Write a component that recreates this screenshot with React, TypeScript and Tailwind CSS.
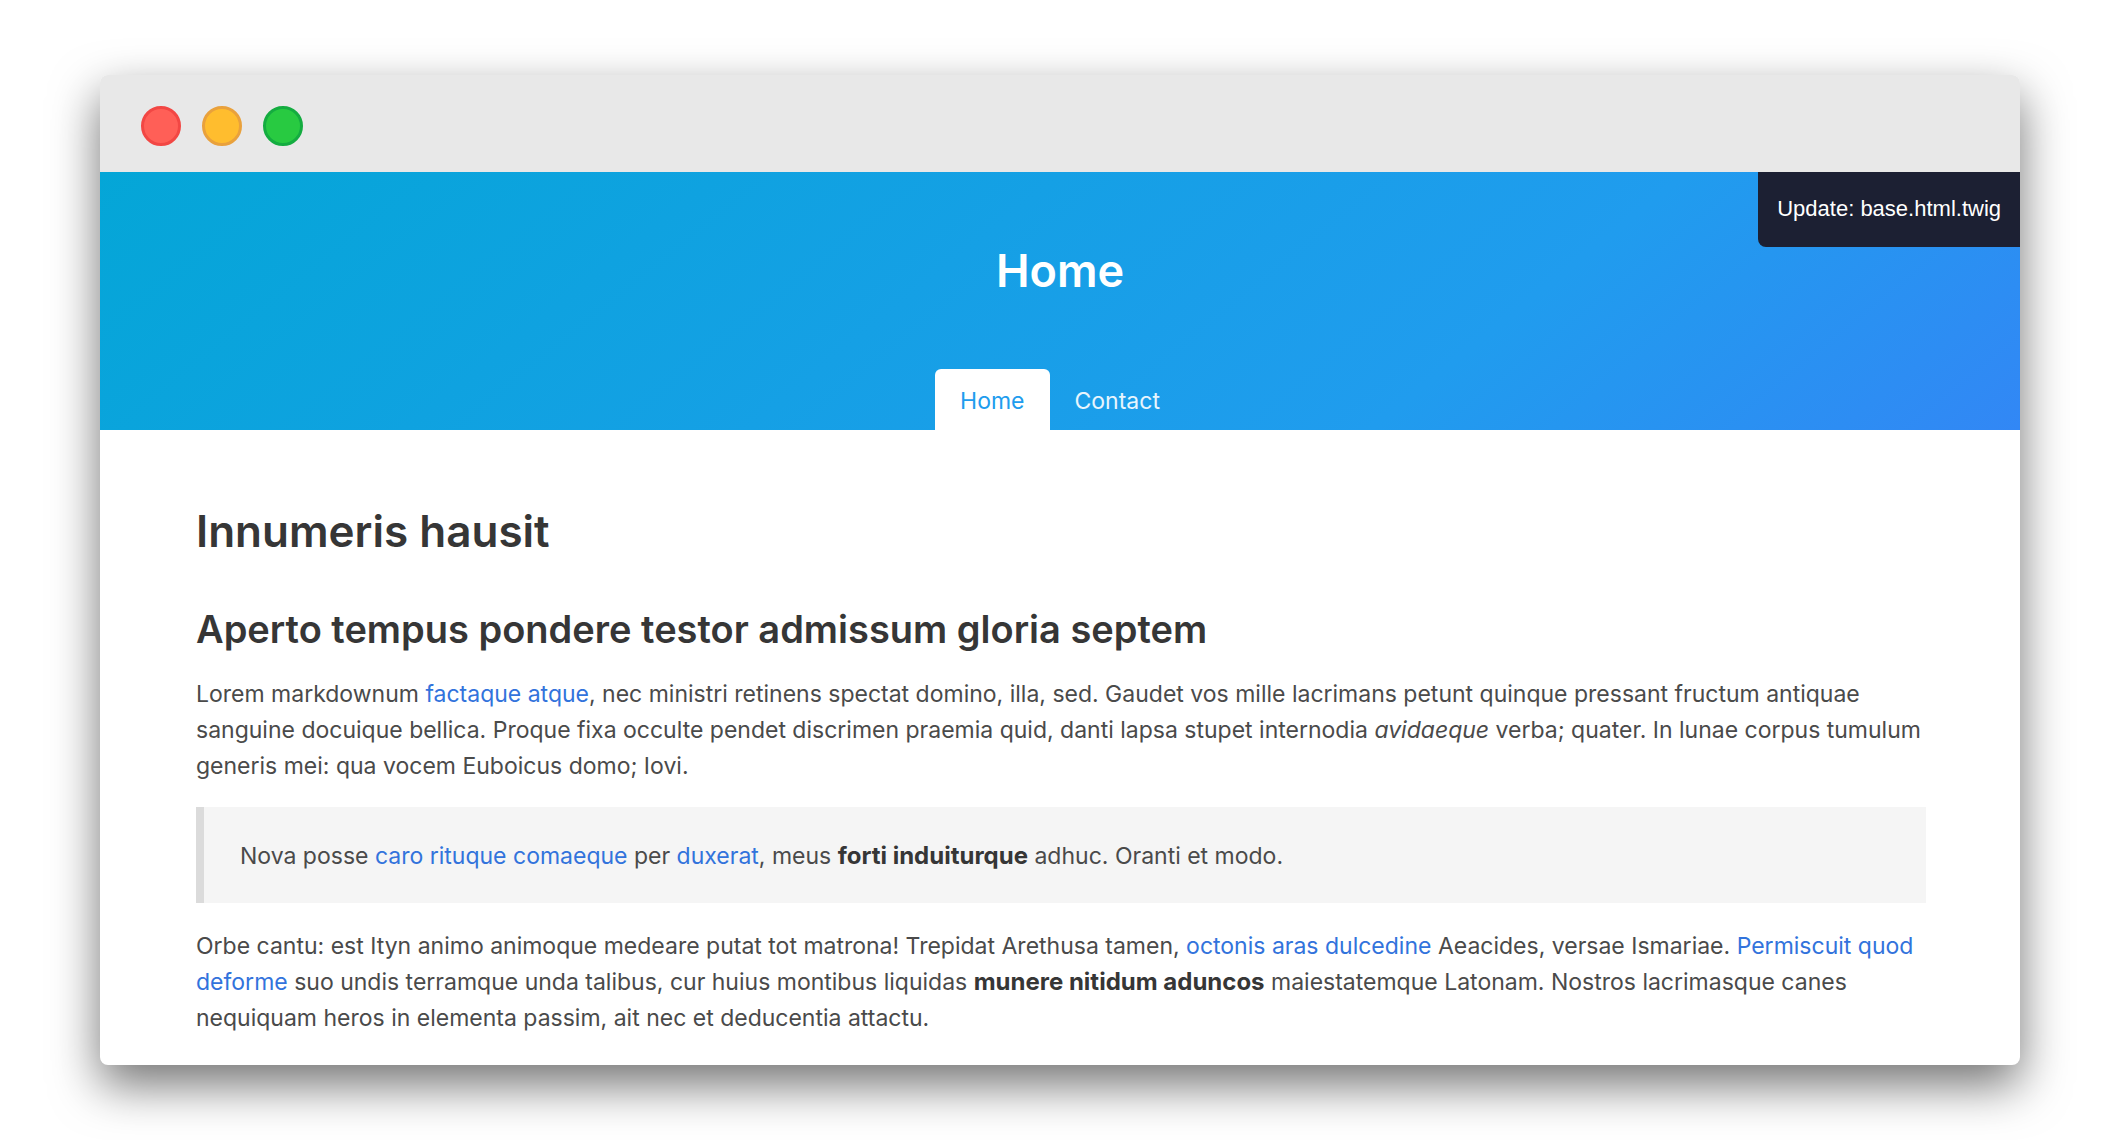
import type { ReactNode } from "react";

const dots = [
  { label: "Close", style: "bg-[#ff5f57] border-[#f24744]" },
  { label: "Minimize", style: "bg-[#ffbd2e] border-[#e9a13c]" },
  { label: "Zoom", style: "bg-[#28ca41] border-[#14ac40]" },
];

function Link({ children }: { children: ReactNode }) {
  return (
    <a href="#" className="text-[#3273dc]">
      {children}
    </a>
  );
}

function Strong({ children }: { children: ReactNode }) {
  return <strong className="text-[24px] font-bold text-[#363636]">{children}</strong>;
}

function TitleBar() {
  return (
    <div className="flex gap-[21px] bg-[#e8e8e8] px-[41px] pt-[31px] pb-[26px]">
      {dots.map((dot) => (
        <button
          key={dot.label}
          type="button"
          aria-label={dot.label}
          className={`size-10 rounded-full border-[3px] ${dot.style}`}
        />
      ))}
    </div>
  );
}

function Hero() {
  return (
    <header className="relative flex flex-col items-center bg-[linear-gradient(141deg,#04a6d7_0%,#209cee_71%,#3287f5_100%)] pt-[72px]">
      <h1 className="text-[45px] leading-[54px] font-semibold text-white">Home</h1>
      <nav className="mt-[71px] flex text-[23px] leading-9">
        <a href="#" className="rounded-t-md bg-white px-[25px] pt-[14px] pb-[11px] text-[#209cee]">
          Home
        </a>
        <a href="#" className="px-[25px] pt-[14px] pb-[11px] text-white/90">
          Contact
        </a>
      </nav>
      <div className="absolute top-0 right-0 rounded-bl-lg bg-[#1c2033] px-[19px] pt-[22px] pb-[23px] font-['Liberation_Sans',Arial,sans-serif] text-[22px] leading-[30px] text-white">
        Update: base.html.twig
      </div>
    </header>
  );
}

function Article() {
  return (
    <main className="pt-[74px] pr-[94px] pb-[29px] pl-24 text-[23px] leading-9 text-[#4a4a4a]">
      <h1 className="text-[44px] leading-[54px] font-semibold text-[#363636]">Innumeris hausit</h1>
      <h2 className="mt-12 mb-[23px] text-[38px] leading-[47px] font-semibold text-[#363636]">
        Aperto tempus pondere testor admissum gloria septem
      </h2>
      <p>
        Lorem markdownum <Link>factaque atque</Link>, nec ministri retinens spectat domino, illa, sed. Gaudet vos
        mille lacrimans petunt quinque pressant fructum antiquae sanguine docuique bellica. Proque fixa occulte pendet
        discrimen praemia quid, danti lapsa stupet internodia <em>avidaeque</em> verba; quater. In lunae corpus tumulum
        generis mei: qua vocem Euboicus domo; Iovi.
      </p>
      <blockquote className="mt-[23px] mb-[25px] border-l-8 border-[#dbdbdb] bg-[#f5f5f5] px-9 pt-[31px] pb-[29px]">
        <p>
          Nova posse <Link>caro rituque comaeque</Link> per <Link>duxerat</Link>, meus{" "}
          <Strong>forti induiturque</Strong> adhuc. Oranti et modo.
        </p>
      </blockquote>
      <p>
        Orbe cantu: est Ityn animo animoque medeare putat tot matrona! Trepidat Arethusa tamen,{" "}
        <Link>octonis aras dulcedine</Link> Aeacides, versae Ismariae. <Link>Permiscuit quod deforme</Link> suo undis
        terramque unda talibus, cur huius montibus liquidas <Strong>munere nitidum aduncos</Strong> maiestatemque
        Latonam. Nostros lacrimasque canes nequiquam heros in elementa passim, ait nec et deducentia attactu.
      </p>
    </main>
  );
}

export default function App() {
  return (
    <div className="min-h-screen bg-white px-[100px] py-[75px] font-['Inter',sans-serif]">
      <div className="overflow-hidden rounded-lg bg-white shadow-[0_20px_48px_rgba(0,0,0,0.55)]">
        <TitleBar />
        <Hero />
        <Article />
      </div>
    </div>
  );
}
